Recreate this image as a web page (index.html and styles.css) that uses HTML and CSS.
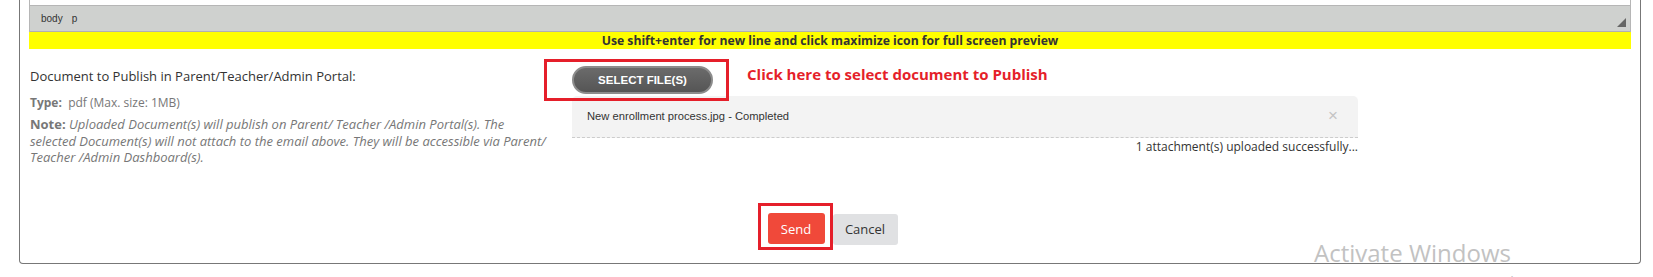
FILE: index.html
```html
<!DOCTYPE html>
<html lang="en">
<head>
  <meta charset="UTF-8">
  <title>Compose Message</title>
  <link rel="stylesheet" href="styles.css">
</head>
<body>
  <div class="panel">
    <!-- editor bottom -->
    <div class="editor">
      <div class="editor-body"></div>
      <div class="editor-status">
        <span class="crumb">body</span>
        <span class="crumb">p</span>
        <span class="resize"></span>
      </div>
    </div>
    <div class="hint">Use shift+enter for new line and click maximize icon for full screen preview</div>

    <!-- attachment section -->
    <div class="publish">
      <div class="publish-info">
        <p class="publish-title">Document to Publish in Parent/Teacher/Admin Portal:</p>
        <p class="publish-type"><b>Type:</b>&nbsp; pdf (Max. size: 1MB)</p>
        <p class="publish-note"><b>Note:</b> <i>Uploaded Document(s) will publish on Parent/ Teacher /Admin Portal(s). The<br>selected Document(s) will not attach to the email above. They will be accessible via Parent/<br>Teacher /Admin Dashboard(s).</i></p>
      </div>
      <div class="publish-upload">
        <div class="select-row">
          <div class="mark-box select-mark">
            <button class="select-btn">SELECT FILE(S)</button>
          </div>
          <span class="mark-text">Click here to select document to Publish</span>
        </div>
        <div class="file-item">
          <span>New enrollment process.jpg - Completed</span>
          <span class="file-close">&times;</span>
        </div>
        <div class="file-status">1 attachment(s) uploaded successfully...</div>
      </div>
    </div>

    <div class="actions">
      <div class="mark-box send-mark">
        <button class="btn btn-send">Send</button>
      </div>
      <button class="btn btn-cancel">Cancel</button>
    </div>
  </div>

  <div class="activate">
    <div class="activate-title">Activate Windows</div>
    <div class="activate-sub">Go to Settings to activate Windows.</div>
  </div>
</body>
</html>
```

FILE: styles.css
```css
body {
  margin: 0;
  font-family: 'Open Sans', sans-serif;
  background: #fff;
  color: #333;
  overflow: hidden;
}

.panel {
  box-sizing: border-box;
  margin-left: 19px;
  width: 1622px;
  height: 264px;
  padding: 0 9px 0 9px;
  border: 1px solid #777;
  border-top: none;
  border-radius: 0 0 4px 4px;
}

.editor {
  border-left: 1px solid #b6b6b6;
  border-right: 1px solid #b6b6b6;
}

.editor-body {
  height: 5px;
  background: #fff;
  border-bottom: 1px solid #b6b6b6;
}

.editor-status {
  height: 25px;
  background: #cfd1cf;
  border-bottom: 1px solid #b0b0b0;
  display: flex;
  align-items: center;
  padding-left: 11px;
  font-size: 10px;
  font-family: Arial, 'Liberation Sans', sans-serif;
  color: #333;
  position: relative;
}

.crumb {
  margin-right: 9px;
}

.resize {
  position: absolute;
  right: 4px;
  bottom: 4px;
  width: 0;
  height: 0;
  border-left: 9px solid transparent;
  border-bottom: 9px solid #666;
}

.hint {
  background: #ffff00;
  height: 17px;
  line-height: 17px;
  text-align: center;
  font-size: 12.2px;
  font-weight: bold;
  color: #333;
}

.publish {
  display: grid;
  grid-template-columns: 515px 1fr;
  padding-top: 10px;
}

.publish-info {
  padding-left: 1px;
}

.publish-info p {
  margin: 0;
}

.publish-title {
  font-size: 13px;
  line-height: 18px;
  margin-top: 8px !important;
}

.publish-type {
  font-size: 12px;
  line-height: 17px;
  color: #777;
  margin-top: 9px !important;
}

.publish-note {
  font-size: 13px;
  line-height: 16.5px;
  color: #777;
  white-space: nowrap;
  margin-top: 5px !important;
}

.select-row {
  display: flex;
  align-items: flex-start;
}

.mark-box {
  box-sizing: border-box;
  border: 3px solid #e51f2a;
  display: flex;
  align-items: center;
}

.select-mark {
  width: 185px;
  height: 42px;
  padding-left: 25px;
}

.select-btn {
  width: 141px;
  height: 28px;
  border: 2px solid #8c8c8c;
  border-radius: 14px;
  background: linear-gradient(#6b6b6b, #555);
  color: #fff;
  font-family: Arial, 'Liberation Sans', sans-serif;
  font-weight: bold;
  font-size: 11.5px;
}

.mark-text {
  margin-left: 18px;
  margin-top: 5px;
  line-height: 20px;
  color: #e51f2a;
  font-weight: bold;
  font-size: 15px;
}

.file-item {
  box-sizing: border-box;
  margin-left: 28px;
  margin-top: -5px;
  width: 786px;
  height: 42px;
  background: #f3f3f3;
  border-radius: 5px 5px 0 0;
  border-bottom: 1px dashed #ccc;
  display: flex;
  align-items: center;
  justify-content: space-between;
  padding: 0 20px 2px 15px;
  font-family: Arial, 'Liberation Sans', sans-serif;
  font-size: 11.2px;
  color: #333;
}

.file-close {
  color: #c4c4c4;
  font-size: 17px;
}

.file-status {
  margin-left: 28px;
  width: 786px;
  text-align: right;
  font-size: 12px;
  line-height: 18px;
  color: #333;
}

.actions {
  display: flex;
  justify-content: center;
  margin-top: 37px;
  padding-right: 5px;
}

.send-mark {
  width: 75px;
  height: 47px;
  padding: 5px 5px 0 7px;
}

.btn {
  height: 31px;
  border: none;
  border-radius: 3px;
  font-family: 'Open Sans', sans-serif;
  font-size: 13px;
}

.btn-send {
  width: 57px;
  background: #f0493a;
  color: #fff;
}

.btn-cancel {
  width: 65px;
  margin-top: 11px;
  background: #e0e1e3;
  color: #333;
}

.activate {
  position: absolute;
  left: 1314px;
  top: 237px;
  color: #c2c2c2;
  font-family: 'Open Sans', sans-serif;
}

.activate-title {
  font-size: 24px;
  line-height: 32px;
}

.activate-sub {
  font-size: 14px;
  line-height: 18px;
  margin-top: 4px;
}
```
